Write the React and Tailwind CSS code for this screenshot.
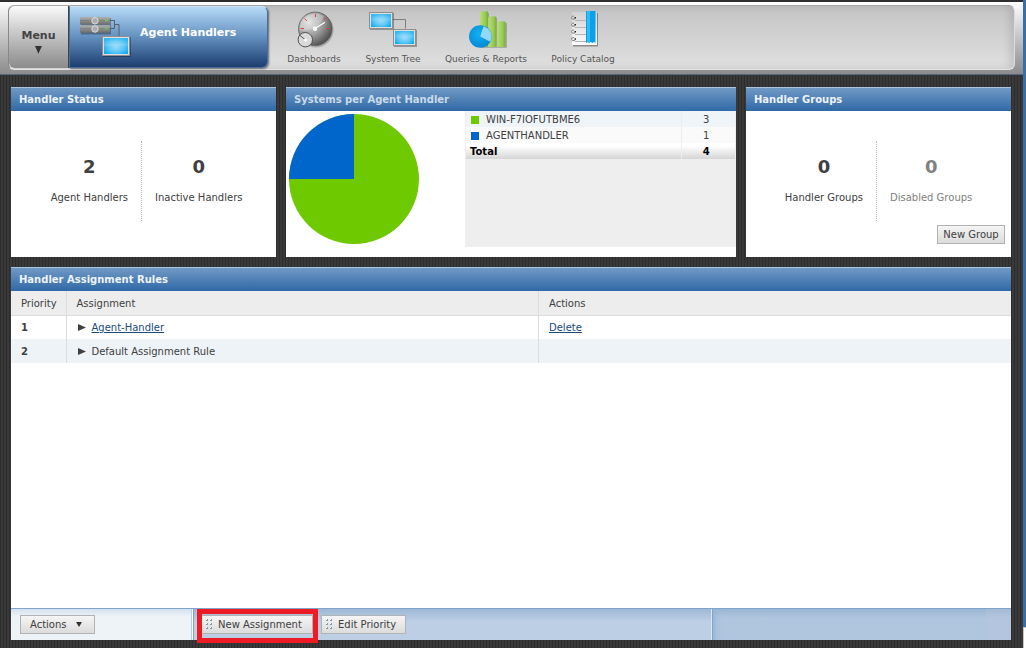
import React from "react";

function Panel({ title, dim, className, children }) {
  return (
    <section className={"flex min-w-0 flex-col bg-white " + (className || "")}>
      <h2
        className={
          "flex h-6 shrink-0 items-center border-t border-[#a9c4de] bg-linear-to-b from-[#7099c5] to-[#2f69a6] px-2 text-[10px] font-bold " +
          (dim ? "text-[#c9dbea]" : "text-[#eef3f8]")
        }
      >
        {title}
      </h2>
      {children}
    </section>
  );
}

function Stat({ value, label, muted, className }) {
  return (
    <div className={"flex h-20 " + className}>
      <div className={"flex flex-col items-center pt-4 " + (muted ? "text-[#808080]" : "text-[#404040]")}>
        <span className="text-[18px] leading-5 font-bold">{value}</span>
        <span className="mt-[13px] text-[10px] leading-4 whitespace-nowrap">{label}</span>
      </div>
    </div>
  );
}

function Stats({ left, right }) {
  return (
    <div className="flex pt-[30px]">
      <Stat {...left} className="w-[131px] justify-end border-r border-dotted border-[#bbbbbb] pr-[13px]" />
      <Stat {...right} className="flex-1 pl-[13px]" />
    </div>
  );
}

function ScreenDefs() {
  return (
    <svg className="absolute size-0" aria-hidden="true">
      <defs>
        <radialGradient id="screen" cx="50%" cy="55%" r="60%">
          <stop offset="0" stopColor="#9adcfa" />
          <stop offset="0.55" stopColor="#5cc6f7" />
          <stop offset="1" stopColor="#0cabef" />
        </radialGradient>
        <linearGradient id="rack" x1="0" y1="0" x2="0" y2="1">
          <stop offset="0" stopColor="#b0b0b0" />
          <stop offset="1" stopColor="#6c6c6c" />
        </linearGradient>
        <radialGradient id="gauge" cx="30%" cy="30%" r="80%">
          <stop offset="0" stopColor="#dcdcdc" />
          <stop offset="0.5" stopColor="#a0a0a0" />
          <stop offset="1" stopColor="#484848" />
        </radialGradient>
        <linearGradient id="bar" x1="0" y1="0" x2="1" y2="0">
          <stop offset="0" stopColor="#b9de7a" />
          <stop offset="0.7" stopColor="#96c850" />
          <stop offset="1" stopColor="#74ad3c" />
        </linearGradient>
        <radialGradient id="pie" cx="45%" cy="40%" r="60%">
          <stop offset="0" stopColor="#10b2f2" />
          <stop offset="1" stopColor="#0789d6" />
        </radialGradient>
        <linearGradient id="paper" x1="0" y1="0" x2="0" y2="1">
          <stop offset="0" stopColor="#d2d2d2" />
          <stop offset="1" stopColor="#fbfbfb" />
        </linearGradient>
      </defs>
    </svg>
  );
}

function Screen({ x, y, w, h }) {
  return (
    <g>
      <rect x={x + 1} y={y + 1} width={w} height={h} fill="#000" opacity="0.3" />
      <rect x={x} y={y} width={w} height={h} fill="#8f8f8f" />
      <rect x={x + 1} y={y + 1} width={w - 2} height={h - 2} fill="#dedede" />
      <rect x={x + 2} y={y + 2} width={w - 4} height={h - 4} fill="url(#screen)" />
      <rect x={x + 2} y={y + 2} width={w - 4} height={(h - 4) / 2} fill="#fff" opacity="0.16" />
    </g>
  );
}

function Rack({ y }) {
  return (
    <g>
      <rect x="0" y={y} width="30" height="7.500" fill="url(#rack)" />
      <path d={`M0 ${y + 3.5}h30`} stroke="#777" strokeWidth="0.6" />
      <circle cx="15" cy={y + 3.8} r="3.200" fill="#adadad" stroke="#dcdcdc" />
      <rect x="25" y={y + 3} width="3" height="1" fill="#55e03c" />
    </g>
  );
}

function HandlersIcon() {
  return (
    <svg width="52" height="42" viewBox="0 0 52 42" aria-hidden="true">
      <rect x="1" y="1" width="30" height="16.500" fill="#000" opacity="0.3" />
      <Rack y={0} />
      <Rack y={8.2} />
      <path d="M30 3.500h4.500v8h-4.500M34.500 7.500h4.500v11.500" fill="none" stroke="#56616b" />
      <Screen x={22} y={19} w={28} h={20} />
    </svg>
  );
}

function GaugeIcon() {
  return (
    <svg width="52" height="40" viewBox="0 0 52 40" aria-hidden="true">
      <circle cx="28" cy="19" r="17.500" fill="#000" opacity="0.2" />
      <circle cx="27.300" cy="17.800" r="16.700" fill="url(#gauge)" stroke="#5a5a5a" strokeWidth="0.8" />
      <path d="M11.500 19a16 16 0 0 1 24-14c-2 10-12 16-24 14z" fill="#fff" opacity="0.25" />
      <path d="M12.500 17.500h3.500M16.500 7.500l2.500 2.500M27.500 3v3M38.300 6.500l-2.500 2.500M42 17.500h-3.500" stroke="#e3343b" strokeWidth="0.9" />
      <path d="M27 17.500l10-6.200" stroke="#fff" strokeWidth="1.300" />
      <circle cx="27" cy="17.700" r="2.200" fill="#fff" />
      <circle cx="17.300" cy="28.700" r="7.200" fill="#dadada" stroke="#444" strokeWidth="0.9" />
      <path d="M12 24.500l5 4" stroke="#444" strokeWidth="0.9" />
      <circle cx="17.500" cy="29" r="1.500" fill="#fff" />
    </svg>
  );
}

function TreeIcon() {
  return (
    <svg width="52" height="40" viewBox="0 0 52 40" aria-hidden="true">
      <path d="M25 8.500h13.500v9" fill="none" stroke="#808080" />
      <Screen x={2} y={1} w={24} h={17} />
      <Screen x={26} y={18} w={23} h={17} />
    </svg>
  );
}

function ReportsIcon() {
  return (
    <svg width="52" height="40" viewBox="0 0 52 40" aria-hidden="true">
      <path d="M21 37V2h8v5h8v5h10v25z" fill="#000" opacity="0.2" />
      <path d="M20 1.500q1-2 8-1v35.500h-8z" fill="url(#bar)" />
      <path d="M28.300 6.500q1-2 8-1v30.500h-8z" fill="url(#bar)" />
      <path d="M37 11.500q1-2 8.500-1v25.500h-8.500z" fill="url(#bar)" />
      <circle cx="20.300" cy="25.500" r="11.300" fill="url(#pie)" />
      <path d="M20.300 25.500l3.200-10.300a10.800 10.800 0 0 1 6.700 15.500z" fill="#92d8fa" />
    </svg>
  );
}

function CatalogIcon() {
  return (
    <svg width="52" height="40" viewBox="0 0 52 40" aria-hidden="true">
      <rect x="16" y="2" width="25" height="33.500" fill="#000" opacity="0.35" />
      <rect x="15" y="1" width="25" height="33" fill="url(#paper)" />
      <path d="M18 9.500h11M18 16.500h11M18 23.500h11M18 30.500h11" stroke="#b5b5b5" />
      <path
        d="M18 8q-3.500 1-3.500-1.500q0-1.500 2.500-1.500M18 15q-3.500 1-3.500-1.500q0-1.500 2.500-1.500M18 22q-3.500 1-3.500-1.500q0-1.500 2.500-1.500M18 29.500q-3.500 1-3.500-1.500q0-1.500 2.500-1.500"
        fill="none"
        stroke="#858585"
      />
      <path d="M17.500 6.700h1.500M17.500 13.700h1.500M17.500 20.700h1.500M17.500 28h1.500" stroke="#222" strokeWidth="1.500" />
      <path d="M29 0h9.500v32l-1.500-1-1.500 1-1.700-1-1.700 1-1.600-1-1.500 1z" fill="#07a2ea" />
      <path d="M30 0h3v31h-3z" fill="#35bbf2" />
    </svg>
  );
}

function NavItem({ label, icon, className }) {
  return (
    <a href="#" className={"flex flex-col items-center text-[9px] leading-3 whitespace-nowrap text-[#555555] " + className}>
      {icon}
      <span className="mt-[2px]">{label}</span>
    </a>
  );
}

function Header() {
  return (
    <header className="border-t-2 border-b border-t-[#2e2e2e] border-b-[#55677f] bg-linear-to-b from-white to-[#8b8b8b] px-2 pt-[3px] pb-1">
      <div className="flex h-[65px] rounded-md border border-t-[#aaaaaa] border-r-[#dddddd] border-b-[#e2e2e2] border-l-[#888888] bg-linear-to-b from-[#c4c4c4] to-[#e0e0e0] shadow-[inset_-4px_0_8px_rgba(0,0,0,0.12)]">
        <button
          type="button"
          className="flex h-[62px] w-[60px] flex-col items-center gap-[2px] rounded-l-md border-r border-[#444444] bg-linear-to-b from-[#fafafa] to-[#8b8b8b] pt-[22px] text-[11px] leading-4 font-bold text-[#444444]"
        >
          Menu
          <svg width="7" height="8" viewBox="0 0 7 8" aria-hidden="true">
            <path d="M1 0h6L4 8z" fill="#ddd" />
            <path d="M0 0h7L3.500 8z" fill="#333" />
          </svg>
        </button>
        <a
          href="#"
          className="flex h-[62px] w-[199px] rounded-r-md border border-[#4a6c98] border-t-[#c9e2f6] bg-linear-to-b from-[#b7dbf7] via-[#6390bf] to-[#1d3f70] pt-[10px] pl-[10px] text-[11px] font-bold text-white shadow-[1px_1px_2px_rgba(0,0,0,0.5)]"
        >
          <HandlersIcon />
          <span className="ml-2 pt-2 leading-4 whitespace-nowrap">Agent Handlers</span>
        </a>
        <nav className="flex gap-6 pt-[5px] pl-[19px]">
          <NavItem label="Dashboards" icon={<GaugeIcon />} className="w-[54px]" />
          <NavItem label="System Tree" icon={<TreeIcon />} className="w-[56px]" />
          <NavItem label="Queries & Reports" icon={<ReportsIcon />} className="w-[82px]" />
          <NavItem label="Policy Catalog" icon={<CatalogIcon />} className="w-16" />
        </nav>
      </div>
    </header>
  );
}

function LegendRow({ swatch, name, count, tint }) {
  return (
    <tr className={"h-4 " + tint}>
      <td className="border-r border-[#eeeeee] p-0 pt-[2px] pl-[5px]">
        <span className={"mr-[7px] inline-block size-2 align-[-1px] " + swatch} />
        {name}
      </td>
      <td className="w-[54px] p-0 pt-[2px] pr-1 text-center">{count}</td>
    </tr>
  );
}

function SystemsChart() {
  return (
    <div className="flex flex-1 justify-between pb-[10px]">
      <svg className="mt-[3px] ml-[3px] shrink-0" width="130" height="130" viewBox="0 0 130 130" role="img" aria-label="Systems per Agent Handler">
        <circle cx="65" cy="65" r="65" fill="#6fc900" />
        <path d="M65 65V0A65 65 0 0 0 0 65z" fill="#0066cc" />
      </svg>
      <div className="w-[271px] bg-[#eeeeee] px-px">
        <table className="w-full border-collapse text-[10px] leading-[14px] text-[#404040]">
          <tbody>
            <LegendRow swatch="bg-[#6fc900]" name="WIN-F7IOFUTBME6" count="3" tint="bg-[#eff4f8]" />
            <LegendRow swatch="bg-[#0066cc]" name="AGENTHANDLER" count="1" tint="bg-[#fafafa]" />
            <tr className="h-4 bg-linear-to-b from-white from-20% to-[#d5d5d5] font-bold text-black">
              <td className="border-r border-[#eeeeee] p-0 pt-[2px] pl-1">Total</td>
              <td className="p-0 pt-[2px] pr-1 text-center">4</td>
            </tr>
          </tbody>
        </table>
      </div>
    </div>
  );
}

function Expand({ label }) {
  return (
    <button type="button" aria-label={label} className="mr-[6px] inline-block">
      <svg width="8" height="7" viewBox="0 0 8 7" aria-hidden="true">
        <path d="M0 0l8 3.500L0 7z" fill="#404040" />
      </svg>
    </button>
  );
}

function RulesTable() {
  return (
    <table className="w-full table-fixed border-collapse text-left text-[10px] leading-4 text-[#404040]">
      <thead>
        <tr className="h-6 border-b border-[#dcdcdc] bg-[#ededed]">
          <th className="w-[55px] border-r border-[#dcdcdc] p-0 pt-[2px] pl-[10px] font-normal">Priority</th>
          <th className="border-r border-[#dcdcdc] p-0 pt-[2px] pl-[10px] font-normal">Assignment</th>
          <th className="p-0 pt-[2px] pl-[10px] font-normal">Actions</th>
        </tr>
      </thead>
      <tbody>
        <tr className="h-6">
          <td className="border-r border-[#dcdcdc] p-0 pt-[2px] pl-[10px] font-bold">1</td>
          <td className="border-r border-[#dcdcdc] p-0 pt-[2px] pl-[11px]">
            <Expand label="Expand Agent-Handler" />
            <a href="#" className="text-[#1a4a7c] underline">Agent-Handler</a>
          </td>
          <td className="p-0 pt-[2px] pl-[10px]">
            <a href="#" className="text-[#1a4a7c] underline">Delete</a>
          </td>
        </tr>
        <tr className="h-6 bg-[#eef3f8]">
          <td className="border-r border-[#dcdcdc] p-0 pt-[2px] pl-[10px] font-bold">2</td>
          <td className="border-r border-[#dcdcdc] p-0 pt-[2px] pl-[11px]">
            <Expand label="Expand Default Assignment Rule" />
            Default Assignment Rule
          </td>
          <td className="p-0" />
        </tr>
      </tbody>
    </table>
  );
}

const buttonStyle =
  "flex items-center border border-[#b3b3b3] bg-linear-to-b from-[#f5f5f5] to-[#dcdcdc] text-[10px] leading-4 whitespace-nowrap text-[#404040] ";

function Grip() {
  return (
    <svg width="7" height="11" viewBox="0 0 7 11" aria-hidden="true">
      <path d="M0 1h2M4 1h2M0 5h2M4 5h2M0 9h2M4 9h2" stroke="#7f9aa8" strokeWidth="2" />
      <path d="M0 .5h1M4 .5h1M0 4.500h1M4 4.500h1M0 8.500h1M4 8.500h1" stroke="#fff" />
    </svg>
  );
}

function ActionBar() {
  return (
    <footer className="mt-auto flex h-8 border-t border-[#82a3cb]">
      <div className="flex w-[181px] items-start border-r border-[#b9cde4] bg-linear-to-b from-[#d3e1ef] to-[#eef3f8] to-25% pt-[6px] pl-[9px]">
        <button type="button" className={buttonStyle + "h-[19px] w-[75px] pl-[9px]"}>
          Actions
          <svg className="ml-[9px]" width="6" height="5" viewBox="0 0 6 5" aria-hidden="true">
            <path d="M0 0h6L3 5z" fill="#333" />
          </svg>
        </button>
      </div>
      <div className="ml-px flex flex-1 items-start gap-2 border-l border-[#82a3cb] bg-linear-to-b from-[#9db8d6] to-[#bdcfe5] to-40% pt-[6px] pl-[7px]">
        <div className="relative">
          <button type="button" className={buttonStyle + "h-[19px] w-[112px] gap-[5px] pl-1"}>
            <Grip />
            New Assignment
          </button>
          <div className="pointer-events-none absolute -top-[6px] -left-1 h-[34px] w-[121px] border-[5px] border-[#ed1c24]" />
        </div>
        <button type="button" className={buttonStyle + "h-[19px] w-[85px] gap-[5px] pl-1"}>
          <Grip />
          Edit Priority
        </button>
      </div>
      <div className="flex w-[300px] border-l border-[#dce7f3]">
        <div className="flex-1 border-l border-[#82a3cb] bg-linear-to-b from-[#9bb7d4] to-[#b0c6df] to-30% shadow-[inset_8px_0_6px_-6px_#97b5d3]" />
        <div className="w-[25px] bg-linear-to-b from-[#a6bad6] to-[#b4c6df] to-30%" />
      </div>
    </footer>
  );
}

export default function App() {
  return (
    <div className="flex min-h-screen font-['Verdana','DejaVu_Sans',sans-serif]">
      <ScreenDefs />
      <div className="flex min-w-0 flex-1 flex-col bg-[repeating-linear-gradient(90deg,#2d2d2d_0_1px,#393939_1px_3px)]">
        <Header />
        <main className="flex flex-1 flex-col gap-[10px] pt-3 pr-3 pb-2 pl-[11px]">
          <div className="grid h-[170px] grid-cols-[265px_1fr_265px] gap-[10px]">
            <Panel title="Handler Status">
              <Stats left={{ value: 2, label: "Agent Handlers" }} right={{ value: 0, label: "Inactive Handlers" }} />
            </Panel>
            <Panel title="Systems per Agent Handler" dim>
              <SystemsChart />
            </Panel>
            <Panel title="Handler Groups">
              <Stats left={{ value: 0, label: "Handler Groups" }} right={{ value: 0, label: "Disabled Groups", muted: true }} />
              <button type="button" className={buttonStyle + "mt-1 mr-[6px] h-[19px] w-[68px] justify-center self-end"}>
                New Group
              </button>
            </Panel>
          </div>
          <Panel title="Handler Assignment Rules" className="flex-1">
            <RulesTable />
            <ActionBar />
          </Panel>
        </main>
      </div>
      <div className="flex w-[3px] shrink-0 flex-col bg-[#3a6ea5]">
        <div className="mt-auto h-[21px] border-t border-l border-[#c9c5bd] bg-white" />
      </div>
    </div>
  );
}
